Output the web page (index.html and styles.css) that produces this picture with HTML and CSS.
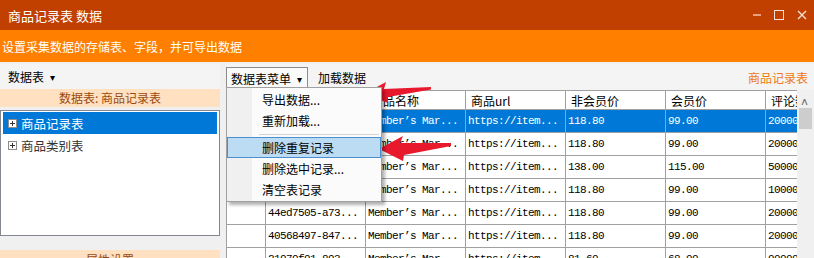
FILE: index.html
```html
<!DOCTYPE html>
<html lang="zh-CN">
  <head>
    <meta charset="UTF-8" />
    <title>商品记录表 数据</title>
    <link rel="stylesheet" href="styles.css">
  </head>
  <body>
    <div class="titlebar">
      <span class="title">商品记录表 数据</span>
      <div class="win-ctrls">
        <span class="ctrl-min"></span>
        <span class="ctrl-max"></span>
        <svg class="ctrl-close" width="10" height="10" viewBox="0 0 10 10">
          <path d="M1 1 L9 9 M9 1 L1 9" stroke="#f4e0d4" stroke-width="1.4" fill="none" />
        </svg>
      </div>
    </div>

    <div class="banner">设置采集数据的存储表、字段，并可导出数据</div>

    <div class="main">
      <div class="left">
        <div class="toolbar">
          <span>数据表</span><span class="caret">▾</span>
        </div>
        <div class="panel-head">数据表: 商品记录表</div>
        <div class="tree">
          <div class="tree-row selected"><span class="plus"></span>商品记录表</div>
          <div class="tree-row"><span class="plus"></span>商品类别表</div>
        </div>
        <div class="panel-head foot">属性设置</div>
      </div>

      <div class="splitter"></div>

      <div class="right">
        <div class="toolbar">
          <div class="menu-btn">数据表菜单<span class="caret">▾</span></div>
          <span class="tool-item">加载数据</span>
          <span class="table-name">商品记录表</span>
        </div>

        <div class="grid-wrap">
          <div class="grid">
            <div class="cell head"></div>
            <div class="cell head">ID</div>
            <div class="cell head">商品名称</div>
            <div class="cell head">商品url</div>
            <div class="cell head">非会员价</div>
            <div class="cell head">会员价</div>
            <div class="cell head">评论数</div>

            <div class="cell sel"></div>
            <div class="cell sel mono">1a3c9e02-b51...</div>
            <div class="cell sel mono">Member’s Mar...</div>
            <div class="cell sel mono">https://item...</div>
            <div class="cell sel mono">118.80</div>
            <div class="cell sel mono">99.00</div>
            <div class="cell sel mono">20000</div>

            <div class="cell"></div>
            <div class="cell mono">5f2d8a17-c04...</div>
            <div class="cell mono">Member’s Mar...</div>
            <div class="cell mono">https://item...</div>
            <div class="cell mono">118.80</div>
            <div class="cell mono">99.00</div>
            <div class="cell mono">20000</div>

            <div class="cell"></div>
            <div class="cell mono">9b71e3c6-2da...</div>
            <div class="cell mono">Member’s Mar...</div>
            <div class="cell mono">https://item...</div>
            <div class="cell mono">138.00</div>
            <div class="cell mono">115.00</div>
            <div class="cell mono">50000</div>

            <div class="cell"></div>
            <div class="cell mono">c8e04b59-71f...</div>
            <div class="cell mono">Member’s Mar...</div>
            <div class="cell mono">https://item...</div>
            <div class="cell mono">118.80</div>
            <div class="cell mono">99.00</div>
            <div class="cell mono">10000</div>

            <div class="cell"></div>
            <div class="cell mono">44ed7505-a73...</div>
            <div class="cell mono">Member’s Mar...</div>
            <div class="cell mono">https://item...</div>
            <div class="cell mono">118.80</div>
            <div class="cell mono">99.00</div>
            <div class="cell mono">20000</div>

            <div class="cell"></div>
            <div class="cell mono">40568497-847...</div>
            <div class="cell mono">Member’s Mar...</div>
            <div class="cell mono">https://item...</div>
            <div class="cell mono">118.80</div>
            <div class="cell mono">99.00</div>
            <div class="cell mono">20000</div>

            <div class="cell"></div>
            <div class="cell mono">21070f91-893...</div>
            <div class="cell mono">Member’s Mar...</div>
            <div class="cell mono">https://item...</div>
            <div class="cell mono">81.60</div>
            <div class="cell mono">68.00</div>
            <div class="cell mono">90000</div>
          </div>

          <div class="vscroll">
            <span class="up">˄</span>
            <span class="thumb"></span>
          </div>
        </div>

        <!-- popup menu of 数据表菜单 -->
        <div class="popup-menu">
          <div class="menu-item">导出数据...</div>
          <div class="menu-item">重新加载...</div>
          <div class="menu-sep"></div>
          <div class="menu-item hot">删除重复记录</div>
          <div class="menu-item">删除选中记录...</div>
          <div class="menu-item">清空表记录</div>
        </div>
      </div>
    </div>

    <svg class="marks" width="814" height="258" viewBox="0 0 814 258">
      <polygon points="364,94 386,82 384,89 431,87 431,89.5 388,97 388,103" fill="#e8192c" />
      <polygon points="379,149 403,136 400,143 451,143 451,146 404,155 403,161" fill="#e8192c" />
    </svg>
  </body>
</html>
```

FILE: styles.css
```css
body {
  margin: 0;
  width: 814px;
  height: 258px;
  overflow: hidden;
  position: relative;
  background: #f0f0f0;
  font-family: "Noto Sans CJK SC", "Liberation Sans", sans-serif;
  font-size: 12px;
  color: #000;
}

.titlebar {
  height: 30px;
  background: #c14000;
  color: #fff;
  display: flex;
  align-items: center;
  padding-left: 8px;
  font-size: 13px;
}

.win-ctrls {
  margin-left: auto;
  display: flex;
  align-items: center;
  gap: 13px;
  padding-right: 7px;
}

.ctrl-min {
  width: 8px;
  height: 2px;
  background: #e8a080;
}

.ctrl-max {
  width: 8px;
  height: 8px;
  border: 1.5px solid #f4e0d4;
}

.banner {
  height: 32px;
  background: #ff8000;
  color: #fff;
  display: flex;
  align-items: center;
  padding-left: 2px;
}

.main {
  display: flex;
  padding-top: 2px;
}

.left {
  width: 220px;
}

.toolbar {
  height: 25px;
  display: flex;
  align-items: center;
  background: #f4f4f4;
}

.left .toolbar {
  padding-left: 8px;
}

.caret {
  font-size: 10px;
  margin-left: 6px;
}

.panel-head {
  height: 18px;
  line-height: 18px;
  background: #ffe0c0;
  color: #9a4a10;
  text-align: center;
}

.panel-head.foot {
  margin-top: 14px;
  height: 20px;
  line-height: 20px;
}

.tree {
  margin-top: 3px;
  height: 122px;
  border: 1px solid #828790;
  background: #fff;
  padding: 1px 2px;
}

.tree-row {
  height: 22px;
  display: flex;
  align-items: center;
  padding-left: 5px;
  color: #333;
  font-size: 12.5px;
}

.tree-row.selected {
  background: #0078d7;
  color: #fff;
}

.plus {
  width: 7px;
  height: 7px;
  border: 1px solid #8c8c8c;
  background: #fff;
  margin-right: 4px;
  position: relative;
}

.plus::before,
.plus::after {
  content: "";
  position: absolute;
  background: #333;
}

.plus::before {
  left: 1px;
  top: 3px;
  width: 5px;
  height: 1px;
}

.plus::after {
  left: 3px;
  top: 1px;
  width: 1px;
  height: 5px;
}

.splitter {
  width: 6px;
}

.right {
  flex: 1;
  position: relative;
}

.right .toolbar {
  height: 26px;
}

.menu-btn {
  height: 22px;
  margin-top: 2px;
  box-sizing: border-box;
  border: 1px solid #8c8c8c;
  border-bottom: none;
  background: #fafafa;
  display: flex;
  align-items: center;
  padding: 0 5px 0 4px;
}

.tool-item {
  margin-left: 10px;
}

.table-name {
  margin-left: auto;
  padding-right: 6px;
  color: #f07810;
}

.grid-wrap {
  display: flex;
  height: 180px;
}

.grid {
  width: 570px;
  overflow: hidden;
  display: grid;
  grid-template-columns: 38px 99px 99px 99px 99px 99px 99px;
  grid-template-rows: 18px repeat(7, 22px);
  gap: 1px;
  background: #a0a0a0;
  border-top: 1px solid #a0a0a0;
  border-left: 1px solid #a0a0a0;
  align-content: start;
}

.cell {
  background: #fff;
  white-space: nowrap;
  overflow: hidden;
  display: flex;
  align-items: center;
  padding-left: 2px;
}

.cell.head {
  padding-left: 5px;
}

.cell.sel {
  background: #0078d7;
  color: #fff;
}

.mono {
  font-family: "Liberation Mono", monospace;
  font-size: 11px;
  letter-spacing: -0.6px;
}

.vscroll {
  width: 17px;
  background: #f0f0f0;
  position: relative;
}

.vscroll .up {
  position: absolute;
  top: 3px;
  left: 4px;
  font-size: 12px;
  color: #606060;
}

.vscroll .thumb {
  position: absolute;
  top: 18px;
  left: 2px;
  width: 13px;
  height: 21px;
  background: #cdcdcd;
}

.popup-menu {
  position: absolute;
  left: 0;
  top: 23px;
  width: 154px;
  padding: 1px 0;
  border: 1px solid #a0a0a0;
  background: linear-gradient(to right, #f0f0f0 25px, #fbfbfb 25px);
  box-shadow: 3px 3px 3px rgba(0, 0, 0, 0.3);
  z-index: 5;
}

.menu-item {
  height: 21px;
  line-height: 21px;
  padding-left: 35px;
  box-sizing: border-box;
}

.menu-item.hot {
  background: #bcdcf4;
  border: 1px solid #4a90d0;
  line-height: 19px;
  padding-left: 34px;
}

.menu-sep {
  height: 1px;
  background: #d4d4d4;
  margin: 3px 2px 2px 32px;
}

.marks {
  position: absolute;
  left: 0;
  top: 0;
  pointer-events: none;
}
```
